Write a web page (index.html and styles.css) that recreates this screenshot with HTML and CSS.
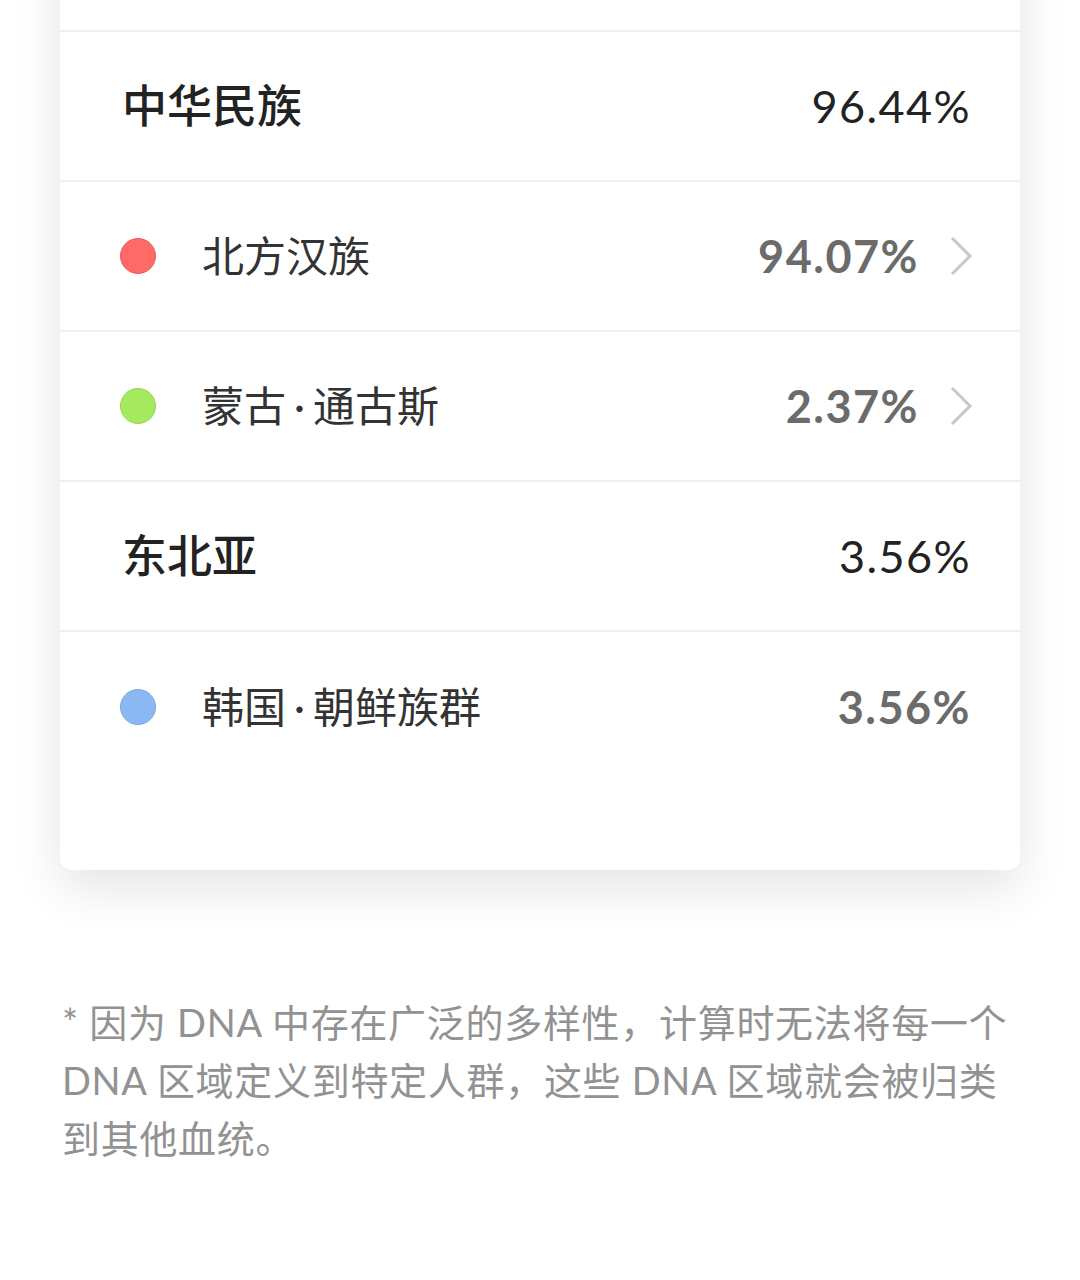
FILE: index.html
```html
<!DOCTYPE html>
<html lang="zh-CN">
<head>
    <meta charset="UTF-8">
    <meta name="viewport" content="width=device-width, initial-scale=1.0">
    <title>祖源构成</title>
    <link rel="stylesheet" href="styles.css">
</head>
<body>
    <div class="page">
        <div class="card">
            <div class="row row-top"></div>
            <div class="row group">
                <span class="name">中华民族</span>
                <span class="pct">96.44%</span>
            </div>
            <div class="row sub">
                <i class="dot dot-red"></i>
                <span class="name">北方汉族</span>
                <span class="pct">94.07%</span>
                <svg class="arrow" viewBox="0 0 26 44"><polyline points="4,4 22,22 4,40"/></svg>
            </div>
            <div class="row sub">
                <i class="dot dot-green"></i>
                <span class="name">蒙古<span class="sep">·</span>通古斯</span>
                <span class="pct">2.37%</span>
                <svg class="arrow" viewBox="0 0 26 44"><polyline points="4,4 22,22 4,40"/></svg>
            </div>
            <div class="row group">
                <span class="name">东北亚</span>
                <span class="pct">3.56%</span>
            </div>
            <div class="row sub">
                <i class="dot dot-blue"></i>
                <span class="name">韩国<span class="sep">·</span>朝鲜族群</span>
                <span class="pct">3.56%</span>
            </div>
        </div>

        <p class="note">* 因为 DNA 中存在广泛的多样性，计算时无法将每一个 DNA 区域定义到特定人群，这些 DNA 区域就会被归类到其他血统。</p>
    </div>
</body>
</html>
```

FILE: styles.css
```css
body {
    margin: 0;
    background-color: #fff;
    font-family: Lato, "Noto Sans CJK SC", sans-serif;
    overflow: hidden;
}

.page {
    width: 960px;
    margin: 0 auto;
}

.card {
    margin-top: -118px;
    padding-bottom: 88px;
    background-color: #fff;
    border-radius: 12px;
    box-shadow: 0 18px 50px rgba(0, 0, 0, 0.11);
}

.row {
    display: flex;
    align-items: center;
    height: 150px;
    box-sizing: border-box;
    border-bottom: 2px solid #f0f0f0;
    padding: 0 49px 0 62px;
}

.row:last-child {
    border-bottom: none;
}

.name {
    flex: 1;
    margin-bottom: 6px;
    font-family: "Noto Sans CJK SC", sans-serif;
}

.sep {
    font-family: Lato, sans-serif;
    margin: 0 8px;
}

.group .name {
    font-size: 45px;
    font-weight: 500;
    color: #222;
}

.group .pct {
    font-size: 45px;
    color: #222;
    letter-spacing: 1.4px;
}

.sub {
    padding-left: 60px;
}

.sub .name {
    font-size: 42px;
    color: #333;
    margin-left: 46px;
}

.sub .pct {
    font-size: 45px;
    font-weight: 700;
    color: #6b6b6b;
    letter-spacing: 1.5px;
}

.dot {
    width: 36px;
    height: 36px;
    border-radius: 50%;
    box-sizing: border-box;
    flex-shrink: 0;
}

.dot-red {
    background-color: #ff6a66;
    border: 1px solid #e85a56;
}

.dot-green {
    background-color: #a6e85e;
    border: 1px solid #94d350;
}

.dot-blue {
    background-color: #8ab8f2;
    border: 1px solid #79a6e0;
}

.arrow {
    width: 26px;
    height: 44px;
    margin-left: 29px;
    margin-right: -3px;
    fill: none;
    stroke: #c8c8c8;
    stroke-width: 3;
}

.note {
    margin: 123px 0 0;
    padding-left: 2px;
    font-size: 38px;
    line-height: 58px;
    color: #929292;
    letter-spacing: 0.7px;
}
```
